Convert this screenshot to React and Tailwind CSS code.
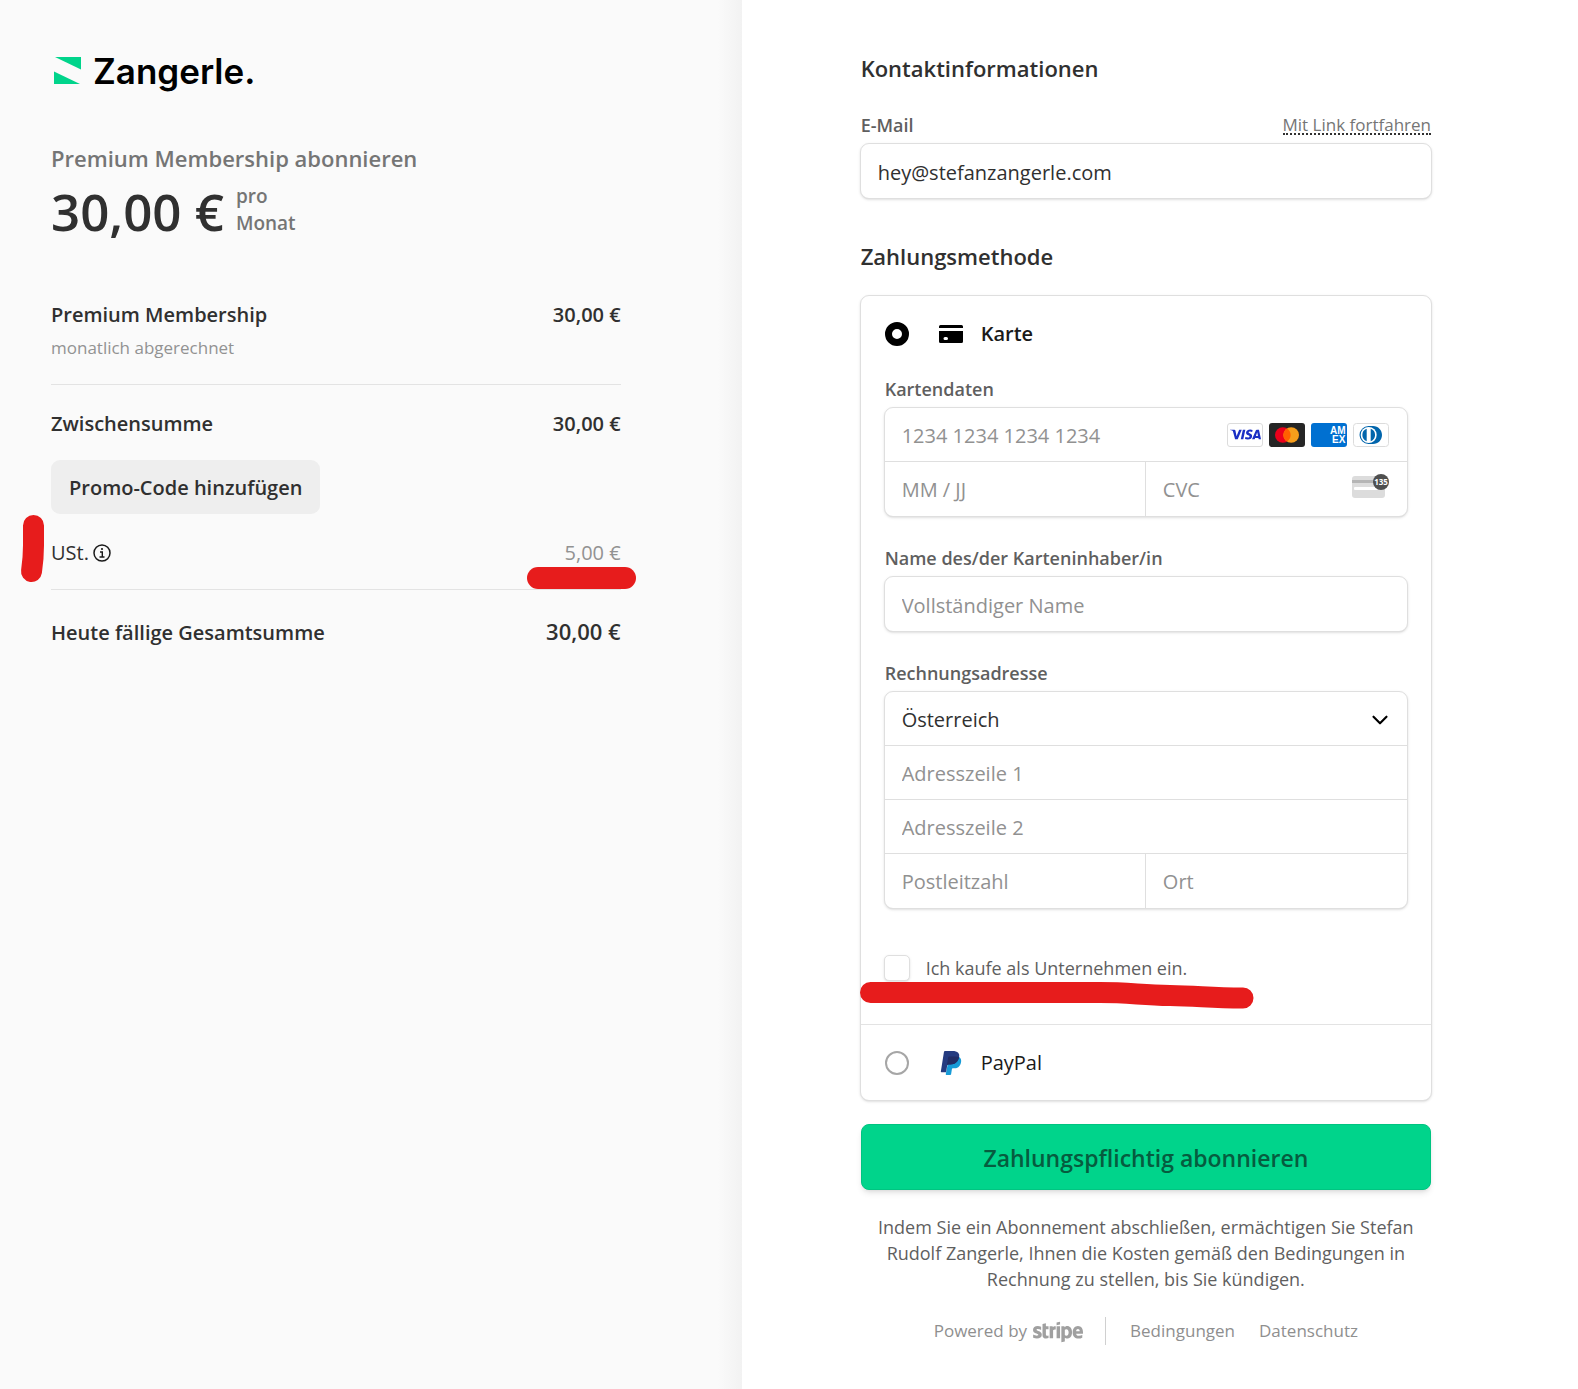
import React, { useState } from 'react';
import { ChevronDown } from 'lucide-react';
import { FaStripe } from 'react-icons/fa';
import { SiVisa } from 'react-icons/si';

const Logo = () => (
  <div className="flex h-9 items-center gap-3 pl-[3px]">
    <svg width="27" height="27" viewBox="0 0 27 27" aria-hidden="true">
      <path d="M1 0H27V12.500Z" fill="#00d48b" />
      <path d="M0 14.500V27H26Z" fill="#00d48b" />
    </svg>
    <span className="pt-0.5 font-['Inter',sans-serif] text-[35px] leading-9 font-semibold text-black">Zangerle.</span>
  </div>
);

const InfoIcon = () => (
  <svg width="18" height="18" viewBox="0 0 18 18" fill="none" stroke="#1a1a1a" aria-hidden="true">
    <circle cx="9" cy="9" r="8" strokeWidth="1.500" />
    <path d="M7 8h2.300v5M6.500 13h5" strokeWidth="1.400" />
    <circle cx="9" cy="5" r="1.100" fill="#1a1a1a" stroke="none" />
  </svg>
);

const CardIcon = () => (
  <svg width="24" height="18" viewBox="0 0 24 18" aria-hidden="true">
    <path d="M1.500 0h21A1.500 1.500 0 0 1 24 1.500V3H0V1.500A1.500 1.500 0 0 1 1.500 0Z" />
    <path
      fillRule="evenodd"
      d="M0 6h24v10.500a1.500 1.500 0 0 1-1.500 1.500h-21A1.500 1.500 0 0 1 0 16.500ZM6 12a1.500 1.500 0 0 0 0 3h1.500a1.500 1.500 0 0 0 0-3Z"
    />
  </svg>
);

const PayPalIcon = () => (
  <svg width="24" height="24" viewBox="0 0 24 24" aria-hidden="true">
    <clipPath id="pp-front">
      <path d="M7.076 21.337H2.470a.641.641 0 0 1-.633-.740L4.944.901C5.026.382 5.474 0 5.998 0h7.460c2.570 0 4.578.543 5.690 1.810 1.010 1.150 1.304 2.420 1.012 4.287-.983 5.250-4.349 7.300-8.647 7.300h-2.190c-.524 0-.968.382-1.050.9Z" />
    </clipPath>
    <path
      fill="#179bd7"
      d="M21.222 6.917a3.350 3.350 0 0 0-1.200-.9L9 12 7 21.837l-.246 1.516a.560.560 0 0 0 .554.647h3.882c.460 0 .850-.334.922-.788l.816-5.090a.932.932 0 0 1 .923-.788h.580c3.760 0 6.705-1.528 7.565-5.946.360-1.847.174-3.388-.774-4.471Z"
    />
    <g clipPath="url(#pp-front)">
      <path fill="#253b80" d="M0 0h24v24H0Z" />
      <path fill="#222d65" d="M8 13.800 9.200 6.300c.1-.600.500-.900 1-.900h6c1.800 0 3.200.3 4.400.9v8H8Z" />
    </g>
  </svg>
);

const CardBrands = () => (
  <div className="flex shrink-0 gap-1.5">
    <span className="flex h-6 w-9 items-center justify-center rounded-[3px] border border-[#dcdcdc] bg-white">
      <SiVisa size={31} color="#1a2fc4" title="Visa" />
    </span>
    <svg width="36" height="24" viewBox="0 0 36 24" aria-label="Mastercard">
      <rect width="36" height="24" rx="3" fill="#252525" />
      <circle cx="13.800" cy="12" r="7.800" fill="#eb001b" />
      <circle cx="22.200" cy="12" r="7.800" fill="#f79e1b" />
      <path d="M18 5.400a7.800 7.800 0 0 1 0 13.200 7.800 7.800 0 0 1 0-13.200Z" fill="#ff5f00" />
    </svg>
    <svg width="36" height="24" viewBox="0 0 36 24" aria-label="American Express">
      <rect width="36" height="24" rx="3" fill="#0070d1" />
      <g fill="#fff" className="font-['Liberation_Sans',sans-serif] text-[10px] font-bold">
        <text x="19" y="11">AM</text>
        <text x="21" y="20">EX</text>
      </g>
    </svg>
    <svg width="36" height="24" viewBox="0 0 36 24" aria-label="Diners Club">
      <rect x=".5" y=".5" width="35" height="23" rx="3" fill="#fff" stroke="#dcdcdc" />
      <path d="M15.500 3h4.500c5.200 0 9 4 9 9s-3.800 9-9 9h-4.500a9 9 0 0 1 0-18Z" fill="#0165ac" />
      <circle cx="15.700" cy="12" r="8" fill="#fff" />
      <path d="M13.700 5.800v12.400a6.600 6.600 0 0 1 0-12.400ZM17.700 5.800v12.400a6.600 6.600 0 0 0 0-12.400Z" fill="#0165ac" />
    </svg>
  </div>
);

const CvcIcon = () => (
  <svg className="mb-1.5 shrink-0" width="37" height="26" viewBox="0 0 37 26" aria-hidden="true">
    <rect y="3" width="33" height="22" rx="3" fill="#dcdcdc" />
    <rect y="7" width="33" height="3" fill="#b5b5b5" />
    <rect x="2" y="14" width="24" height="3" rx="1" fill="#fff" />
    <circle cx="29" cy="9" r="8" fill="#4f4f4f" />
    <text x="29" y="12" textAnchor="middle" fill="#fff" className="font-['Open_Sans',sans-serif] text-[8px] font-bold">135</text>
  </svg>
);

const Row = ({ label, children }) => (
  <div className="flex justify-between text-[20px] leading-[30px] font-semibold">
    <span>{label}</span>
    <span>{children}</span>
  </div>
);

const boxClass = 'overflow-hidden rounded-[9px] border border-[#dfdfdf] bg-white shadow-sm';
const inputClass =
  'w-full min-w-0 bg-transparent px-[17px] pt-0.5 text-[20px] text-[#303030] placeholder:text-[#919191] focus:outline-none';
const labelClass = 'block pl-px text-[18px] leading-[26px] font-semibold text-[#5f5f5f]';
const radioClass = 'size-6 shrink-0 appearance-none rounded-full border-2 border-[#a6a6a6] bg-white checked:border-[7px] checked:border-black';

const Summary = () => (
  <section className="w-[47%] shrink-0 bg-[linear-gradient(to_left,#f2f2f2,#fafafa_24px)] pt-[52px] pr-[121px] pl-[51px] text-[#303030]">
    <Logo />
    <h1 className="mt-[54px] text-[22px] leading-8 font-semibold text-[#757575]">Premium Membership abonnieren</h1>
    <div className="mt-[7px] flex gap-3">
      <span className="text-[51px] leading-[60px] font-semibold">30,00 €</span>
      <span className="pt-0.5 text-[19px] leading-[27px] font-semibold text-[#757575]">
        pro
        <br />
        Monat
      </span>
    </div>

    <div className="mt-[59px] border-b border-[#e3e3e3] pb-[23px]">
      <Row label="Premium Membership">30,00 €</Row>
      <p className="mt-[5px] text-[17px] leading-[26px] text-[#929292]">monatlich abgerechnet</p>
    </div>

    <div className="border-b border-[#e3e3e3] pt-6 pb-[21px]">
      <Row label="Zwischensumme">30,00 €</Row>
      <button type="button" className="mt-[21px] h-[54px] rounded-[9px] bg-[#eeeeee] px-[18px] pt-0.5 text-[20px] font-semibold">
        Promo-Code hinzufügen
      </button>
      <div className="relative mt-6 flex justify-between text-[20px] leading-[30px]">
        <span className="flex items-center gap-1">
          USt. <InfoIcon />
        </span>
        <span className="text-[#929292]">5,00 €</span>
        {/* Markierungen */}
        <svg className="absolute -top-6 -left-[31px] overflow-visible" width="26" height="70" viewBox="0 0 26 70" fill="none" aria-hidden="true">
          <path d="M13.500 11.500v20q0 12-2 26" stroke="#e71c1c" strokeWidth="21" strokeLinecap="round" />
        </svg>
        <span className="absolute top-[29px] -right-[15px] h-[22px] w-[109px] rounded-full bg-[#e71c1c]" />
      </div>
    </div>

    <div className="mt-[27px] flex items-baseline justify-between leading-7 font-semibold">
      <span className="text-[20px]">Heute fällige Gesamtsumme</span>
      <span className="text-[22px]">30,00 €</span>
    </div>
  </section>
);

const CardForm = () => (
  <>
    <label htmlFor="card-number" className={`${labelClass} mt-7`}>
      Kartendaten
    </label>
    <div className={`${boxClass} mt-[5px]`}>
      <div className="flex h-[54px] items-center border-b border-[#dfdfdf] pr-[18px]">
        <input id="card-number" className={inputClass} placeholder="1234 1234 1234 1234" />
        <CardBrands />
      </div>
      <div className="grid h-[54px] grid-cols-2">
        <input aria-label="Ablaufdatum" className={`${inputClass} border-r border-[#dfdfdf]`} placeholder="MM / JJ" />
        <div className="flex items-center pr-[18px]">
          <input aria-label="CVC" className={inputClass} placeholder="CVC" />
          <CvcIcon />
        </div>
      </div>
    </div>

    <label htmlFor="holder" className={`${labelClass} mt-7`}>
      Name des/der Karteninhaber/in
    </label>
    <div className={`${boxClass} mt-[5px]`}>
      <input id="holder" className={`${inputClass} block h-[54px]`} placeholder="Vollständiger Name" />
    </div>

    <label htmlFor="country" className={`${labelClass} mt-7`}>
      Rechnungsadresse
    </label>
    <div className={`${boxClass} mt-[5px] divide-y divide-[#dfdfdf]`}>
      <div className="relative">
        <select id="country" className={`${inputClass} block h-[53px] appearance-none`} defaultValue="AT">
          <option value="AT">Österreich</option>
          <option value="DE">Deutschland</option>
          <option value="CH">Schweiz</option>
        </select>
        <ChevronDown size={26} className="pointer-events-none absolute top-[15px] right-3.5 text-black" />
      </div>
      <input aria-label="Adresszeile 1" className={`${inputClass} block h-[54px]`} placeholder="Adresszeile 1" />
      <input aria-label="Adresszeile 2" className={`${inputClass} block h-[54px]`} placeholder="Adresszeile 2" />
      <div className="grid h-[54px] grid-cols-2">
        <input aria-label="Postleitzahl" className={`${inputClass} border-r border-[#dfdfdf]`} placeholder="Postleitzahl" />
        <input aria-label="Ort" className={inputClass} placeholder="Ort" />
      </div>
    </div>

    <div className="relative mt-[46px] mb-[43px]">
      <label className="flex items-center gap-4 text-[18px] leading-[26px] text-[#5f5f5f]">
        <input type="checkbox" className="size-[26px] appearance-none rounded-[5px] border border-[#dfdfdf] bg-white shadow-sm checked:bg-black" />
        Ich kaufe als Unternehmen ein.
      </label>
      <svg className="pointer-events-none absolute top-[27px] -left-6" width="394" height="28" viewBox="0 0 394 28" fill="none" aria-hidden="true">
        <path d="M10.500 10.500H240C270 10.500 280 13 310 13.500S350 16 383 16" stroke="#e71c1c" strokeWidth="21" strokeLinecap="round" strokeLinejoin="round" />
      </svg>
    </div>
  </>
);

const PaymentForm = ({ method, setMethod }) => (
  <form className="flex-1 bg-white pt-[52px] pr-[146px] pl-[118px]" onSubmit={(e) => e.preventDefault()}>
    <h2 className="pl-px text-[22px] leading-8 font-semibold text-[#303030]">Kontaktinformationen</h2>
    <div className="mt-7 flex items-end justify-between">
      <label htmlFor="email" className={labelClass}>
        E-Mail
      </label>
      <a href="#link" className="mr-px mb-[3px] border-b-2 border-dotted border-[#303030] text-[17px] leading-4 text-[#757575]">
        Mit Link fortfahren
      </a>
    </div>
    <div className={`${boxClass} mt-[5px]`}>
      <input id="email" type="email" className={`${inputClass} block h-[54px]`} defaultValue="hey@stefanzangerle.com" />
    </div>

    <h2 className="mt-[41px] pl-px text-[22px] leading-8 font-semibold text-[#303030]">Zahlungsmethode</h2>
    <div className="mt-[23px] rounded-[9px] border border-[#dfdfdf] bg-white shadow-sm">
      <div className="border-b border-[#e3e3e3] px-[23px] pt-6">
        <label className="flex items-center pl-px text-[20px] leading-7 font-semibold text-[#1a1a1a]">
          <input type="radio" name="method" className={radioClass} checked={method === 'card'} onChange={() => setMethod('card')} />
          <span className="mr-[18px] ml-[30px]">
            <CardIcon />
          </span>
          Karte
        </label>
        <CardForm />
      </div>
      <label className="flex h-[75px] items-center px-6 text-[20px] text-[#1a1a1a]">
        <input type="radio" name="method" className={radioClass} checked={method === 'paypal'} onChange={() => setMethod('paypal')} />
        <span className="mr-[18px] ml-[30px]">
          <PayPalIcon />
        </span>
        PayPal
      </label>
    </div>

    <div className="mt-[23px] px-px">
      <button type="submit" className="h-[66px] w-full rounded-[8px] border border-[#00c481] bg-[#00d48b] pt-0.5 text-[23px] font-semibold text-[#065c3f] shadow-md">
        Zahlungspflichtig abonnieren
      </button>
    </div>

    <p className="mt-6 text-center text-[18px] leading-[26px] text-[#5f5f5f]">
      Indem Sie ein Abonnement abschließen, ermächtigen Sie Stefan Rudolf Zangerle, Ihnen die Kosten gemäß den Bedingungen in
      Rechnung zu stellen, bis Sie kündigen.
    </p>

    <footer className="mt-[25px] flex items-center justify-center text-[17px] leading-[26px] text-[#8f8f8f]">
      <a href="#stripe" className="flex items-center gap-1.5 border-r border-[#d0d0d0] pr-[22px]">
        Powered by
        <FaStripe size={50} color="#a0a0a0" className="-mt-2.5 -mb-3" title="stripe" />
      </a>
      <a href="#terms" className="ml-6">
        Bedingungen
      </a>
      <a href="#privacy" className="ml-6">
        Datenschutz
      </a>
    </footer>
  </form>
);

const App = () => {
  const [method, setMethod] = useState('card'); // 'card', 'paypal'

  return (
    <div className="flex min-h-screen font-['Open_Sans','Noto_Sans',sans-serif]">
      <Summary />
      <PaymentForm method={method} setMethod={setMethod} />
    </div>
  );
};

export default App;
